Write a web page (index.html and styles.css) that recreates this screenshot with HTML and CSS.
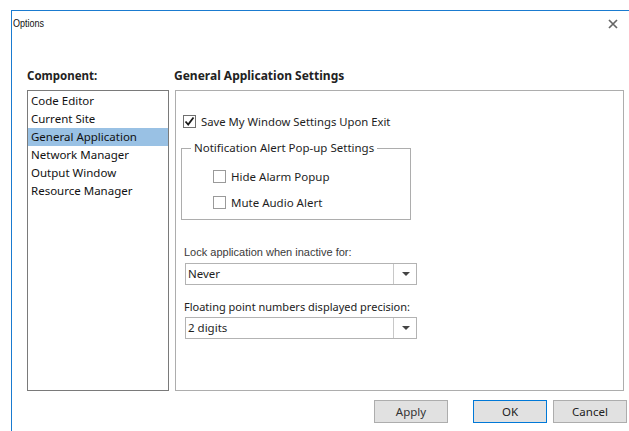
FILE: index.html
```html
<!DOCTYPE html>
<html lang="en">
<head>
<meta charset="utf-8">
<title>Options</title>
<link rel="stylesheet" href="styles.css">
</head>
<body>
<div class="window">
  <div class="titlebar">
    <span class="title">Options</span>
    <svg class="close" width="10" height="10" viewBox="0 0 10 10"><path d="M1 1L9 9M9 1L1 9" stroke="#666" stroke-width="1.7" fill="none"/></svg>
  </div>
  <div class="content">
    <div class="label">Component:</div>
    <div class="label heading">General Application Settings</div>
    <ul class="list">
      <li>Code Editor</li>
      <li>Current Site</li>
      <li class="selected">General Application</li>
      <li>Network Manager</li>
      <li>Output Window</li>
      <li>Resource Manager</li>
    </ul>
    <div class="panel">
      <label class="check-row save">
        <span class="box checked"><svg width="11" height="11" viewBox="0 0 11 11"><path d="M1.5 5.5L4.2 8.5L9.5 1.5" stroke="#1a1a1a" stroke-width="1.8" fill="none"/></svg></span>
        Save My Window Settings Upon Exit
      </label>
      <fieldset class="group">
        <legend>Notification Alert Pop-up Settings</legend>
        <label class="check-row first"><span class="box"></span>Hide Alarm Popup</label>
        <label class="check-row second"><span class="box"></span>Mute Audio Alert</label>
      </fieldset>
      <div class="field-label light">Lock application when inactive for:</div>
      <div class="combo"><span class="value">Never</span><span class="arrow"></span></div>
      <div class="field-label dark">Floating point numbers displayed precision:</div>
      <div class="combo last"><span class="value">2 digits</span><span class="arrow"></span></div>
    </div>
  </div>
  <div class="buttons">
    <button class="btn apply">Apply</button>
    <button class="btn default">OK</button>
    <button class="btn">Cancel</button>
  </div>
</div>
</body>
</html>
```
FILE: styles.css
```css
html, body {
  margin: 0;
  padding: 0;
  background: #ffffff;
}

body {
  font-family: "Noto Sans", "Open Sans", sans-serif;
  font-size: 11px;
  color: #1e1e1e;
  overflow: hidden;
}

.window {
  margin: 10px 0 0 11px;
  border-top: 1px solid #1a7bd0;
  border-left: 1px solid #1a7bd0;
  height: 430px;
  background: #ffffff;
}

.titlebar {
  height: 30px;
  display: flex;
  align-items: flex-start;
  justify-content: space-between;
  padding: 6px 11px 0 1px;
  box-sizing: border-box;
}

.title {
  font-family: "Liberation Sans", sans-serif;
  font-size: 11px;
  line-height: 12px;
  color: #111;
  display: inline-block;
  transform: scaleX(0.82);
  transform-origin: left center;
}

.close {
  margin-top: 2px;
}

.content {
  display: grid;
  grid-template-columns: 142px 449px;
  grid-template-rows: 22px 301px;
  column-gap: 6px;
  padding: 27px 0 0 15px;
}

.label {
  font-weight: 700;
  font-size: 11.5px;
  line-height: 16px;
  color: #222;
}

.label.heading {
  margin-left: -1px;
  font-size: 12px;
}

.list {
  list-style: none;
  margin: 0;
  padding: 1px 0 0;
  border: 1px solid #7a7a7a;
  box-sizing: border-box;
}

.list li {
  height: 18px;
  line-height: 18px;
  padding-left: 3px;
  font-size: 11.5px;
  color: #111;
}

.list li.selected {
  background: #99c1e4;
}

.panel {
  border: 1px solid #adadad;
  box-sizing: border-box;
  display: flex;
  flex-direction: column;
  align-items: flex-start;
}

.check-row {
  display: flex;
  align-items: center;
  height: 18px;
  gap: 5px;
  font-size: 11.3px;
  color: #1e1e1e;
}

.box {
  width: 13px;
  height: 13px;
  box-sizing: border-box;
  border: 1px solid #9a9a9a;
  background: #fff;
  display: flex;
  align-items: center;
  justify-content: center;
}

.box.checked {
  border-color: #6f6f6f;
}

.save {
  margin: 21px 0 0 7px;
}

.group {
  margin: 10px 0 0 5px;
  padding: 0 0 8px 31px;
  width: 230px;
  box-sizing: border-box;
  border: 1px solid #adadad;
}

.group legend {
  margin-left: -22px;
  padding: 0 3px;
  font-size: 11.5px;
  line-height: 16px;
  color: #1e1e1e;
}

.group .check-row {
  font-size: 11.5px;
}

.group .check-row.first {
  margin-top: 11px;
}

.group .check-row.second {
  margin-top: 8px;
}

.field-label {
  margin-left: 8px;
  line-height: 16px;
}

.field-label.light {
  font-family: "Liberation Sans", sans-serif;
  font-size: 11px;
  color: #3a3a3a;
  margin-top: 24px;
}

.field-label.dark {
  font-size: 11px;
  color: #222;
  margin-top: 14px;
}

.combo {
  margin: 3px 0 0 9px;
  width: 232px;
  height: 22px;
  box-sizing: border-box;
  border: 1px solid #b3b3b3;
  display: flex;
  align-items: stretch;
  background: #fff;
}

.combo.last {
  margin-top: 2px;
}

.combo .value {
  flex: 1;
  padding-left: 2px;
  line-height: 20px;
  font-size: 11.5px;
  border-right: 1px solid #c8c8c8;
}

.combo .arrow {
  width: 22px;
  position: relative;
}

.combo .arrow::after {
  content: "";
  position: absolute;
  left: 8px;
  top: 8px;
  border-left: 4px solid transparent;
  border-right: 4px solid transparent;
  border-top: 4px solid #444;
}

.buttons {
  display: flex;
  justify-content: flex-end;
  padding: 9px 2px 0 0;
  gap: 6px;
}

.btn {
  width: 74px;
  height: 23px;
  box-sizing: border-box;
  border: 1px solid #adadad;
  background: #e1e1e1;
  font-family: "Noto Sans", "Open Sans", sans-serif;
  font-size: 11.5px;
  color: #222;
  padding: 0;
}

.btn.apply {
  margin-right: 19px;
  color: #333;
}

.btn.default {
  border-color: #0078d7;
}
```
